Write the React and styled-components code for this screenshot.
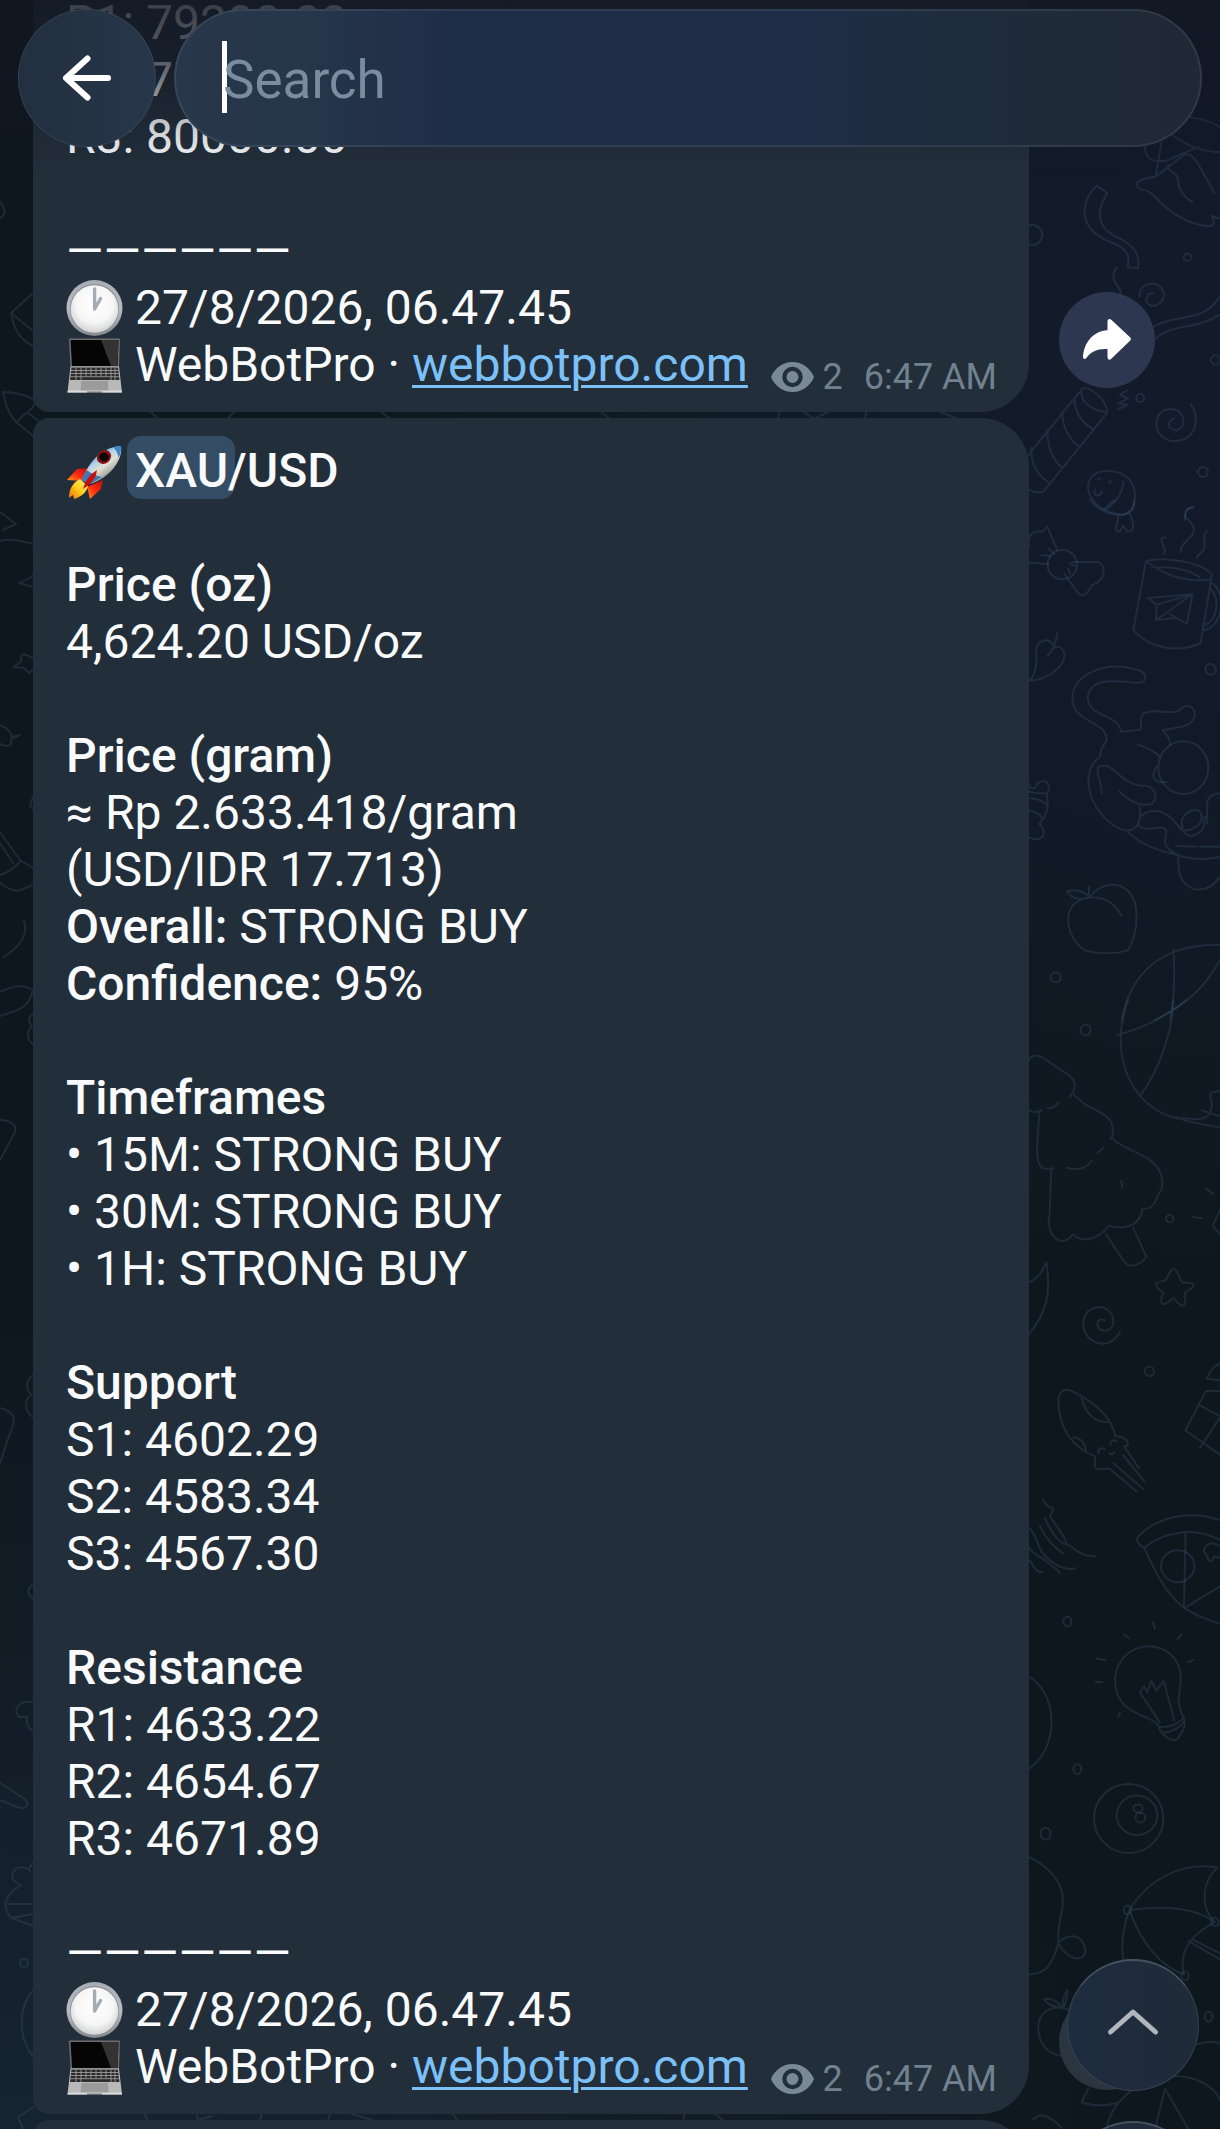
import React from 'react'
import styled, { createGlobalStyle } from 'styled-components'

const GlobalStyle = createGlobalStyle`
  * {
    box-sizing: border-box;
  }

  body {
    margin: 0;
    background: #0f171f;
    color: #f8fafc;
    font-family: Roboto, "Liberation Sans", sans-serif;
  }
`

const Page = styled.div`
  position: relative;
  height: 100vh;
  overflow: hidden;
  background:
    radial-gradient(ellipse 70% 44% at 100% 16%, #131a2a 0%, #121a28 45%, rgba(19, 26, 42, 0) 100%),
    radial-gradient(ellipse 90% 38% at 0% 100%, #162431 0%, rgba(21, 35, 47, 0) 100%),
    #0f171e;
`

const Wallpaper = styled.svg`
  position: absolute;
  inset: 0;
  width: 100%;
  height: 100%;
  fill: none;
  stroke: rgba(84, 118, 156, 0.2);
  stroke-width: 2px;
  stroke-linecap: round;
  stroke-linejoin: round;

  path,
  circle,
  ellipse {
    vector-effect: non-scaling-stroke;
  }
`

const TopBar = styled.header`
  position: fixed;
  top: 0;
  left: 0;
  right: 0;
  z-index: 2;
  display: flex;
  gap: 18px;
  padding: 9px 18px 24px;
  background: linear-gradient(
    rgba(18, 24, 35, 0.84) 0%,
    rgba(18, 24, 35, 0.68) 38%,
    rgba(18, 24, 35, 0.16) 78%,
    rgba(18, 24, 35, 0) 100%
  );
`

const BackButton = styled.button`
  display: flex;
  align-items: center;
  justify-content: center;
  flex: none;
  width: 138px;
  height: 138px;
  padding: 0;
  border: 1px solid rgba(255, 255, 255, 0.08);
  border-radius: 50%;
  background: linear-gradient(90deg, #222f40, #27364a);
  cursor: pointer;
`

const SearchBox = styled.label`
  display: flex;
  align-items: center;
  flex: 1;
  height: 138px;
  padding: 0 46px;
  border: 2px solid rgba(255, 255, 255, 0.08);
  border-radius: 69px;
  background: linear-gradient(90deg, #28374a 0%, #26364b 12%, #1e2d46 28%, #1e2d45 62%, #1f2b38 86%, #1f2935 100%);
  background-origin: border-box;
`

const Caret = styled.span`
  flex: none;
  width: 5px;
  height: 72px;
  margin: 0 -4px 2px 0;
  background: #fff;
`

const SearchInput = styled.input`
  flex: 1;
  min-width: 0;
  padding: 4px 0 0;
  border: 0;
  outline: 0;
  background: none;
  color: #fff;
  caret-color: transparent;
  font-family: inherit;
  font-size: 53px;

  &::placeholder {
    color: #7a8c9d;
    opacity: 1;
  }
`

const MessageList = styled.main`
  position: relative;
  z-index: 1;
  display: flex;
  flex-direction: column;
  gap: 6px;
  margin-top: -30px;
`

const MessageRow = styled.div`
  display: flex;
  align-items: flex-end;
  gap: 30px;
  padding: 0 65px 0 33px;
`

const Bubble = styled.article`
  flex: 1;
  min-height: 160px;
  padding: 24px 32px 14px 33px;
  border-radius: ${({ $continued }) => ($continued ? '0 0 48px 16px' : '16px 48px 48px 16px')};
  background: #222e3a;
  font-size: 48px;
  line-height: 57px;
`

const Section = styled.section`
  & + & {
    margin-top: 57px;
  }
`

const Line = styled.p`
  margin: 0;
  white-space: nowrap;
  font-weight: ${({ $bold }) => ($bold ? 500 : 400)};
`

const Strong = styled.b`
  font-weight: 500;
`

const Highlight = styled.mark`
  margin: 0 -7px 0 -8px;
  padding: 6px 7px 0 8px;
  border-radius: 14px;
  background: #344c64;
  color: inherit;
`

const SiteLink = styled.a`
  color: #7cc0f8;
  text-decoration: underline;
  text-decoration-thickness: 3px;
  text-underline-offset: 4px;
`

const LastRow = styled.div`
  display: flex;
  align-items: flex-end;
  justify-content: space-between;

  ${Line} {
    margin-bottom: 5px;
  }
`

const Meta = styled.div`
  display: flex;
  align-items: center;
  color: #71818f;
  font-size: 36px;
  line-height: 42px;
  white-space: nowrap;
`

const Views = styled.span`
  display: flex;
  align-items: center;
  gap: 9px;
  margin-right: 21px;
`

const Emoji = styled.svg`
  width: 57px;
  height: 57px;
  vertical-align: top;
`

const ForwardButton = styled.button`
  display: flex;
  align-items: center;
  justify-content: center;
  flex: none;
  width: 96px;
  height: 96px;
  margin-bottom: 24px;
  padding: 0;
  border: 0;
  border-radius: 50%;
  background: ${({ $muted }) => ($muted ? '#2a3540' : '#2d3850')};
  cursor: pointer;
`

const JumpButtons = styled.nav`
  position: fixed;
  right: 21px;
  bottom: -124px;
  z-index: 3;
  display: flex;
  flex-direction: column;
  gap: 30px;
`

const JumpButton = styled.button`
  display: flex;
  align-items: center;
  justify-content: center;
  width: 132px;
  height: 132px;
  padding: 0 0 8px;
  border: 1px solid rgba(255, 255, 255, 0.1);
  border-top: 2px solid rgba(255, 255, 255, 0.18);
  border-radius: 50%;
  background: linear-gradient(90deg, #1f2c40, #1f2b38);
  background-origin: border-box;
  cursor: pointer;
`

const ClockEmoji = () => (
  <Emoji viewBox="0 0 57 57" role="img" aria-label="one o'clock">
    <defs>
      <linearGradient id="rim" x1="0" y1="0" x2="0" y2="1">
        <stop offset="0" stopColor="#a6acb6" />
        <stop offset=".5" stopColor="#b9bcc1" />
        <stop offset="1" stopColor="#85888d" />
      </linearGradient>
      <radialGradient id="face" cx=".5" cy=".4" r=".6">
        <stop offset="0" stopColor="#fff" />
        <stop offset=".65" stopColor="#f6f6f6" />
        <stop offset="1" stopColor="#d2d3d5" />
      </radialGradient>
    </defs>
    <circle cx="28.5" cy="29" r="28" fill="url(#rim)" />
    <circle cx="28.5" cy="29.5" r="24.5" fill="#8b8f96" />
    <circle cx="28.5" cy="30" r="23.8" fill="url(#face)" />
    <path d="M28.6 10v20l6-10.5" fill="none" stroke="#a4abb3" strokeWidth="3.4" strokeLinecap="round" strokeLinejoin="round" />
  </Emoji>
)

const LaptopEmoji = () => (
  <Emoji viewBox="0 0 57 57" role="img" aria-label="laptop">
    <path d="M3 3.5Q3 2.5 4 2.5H53Q54 2.5 54 3.5L53 31H4.5Z" fill="#6c6e70" />
    <path d="M4.5 4H52.500L51.500 30H6Z" fill="#050505" />
    <path d="M35 4H52.500L51.500 30H45Z" fill="#333" />
    <path d="M4.5 30.5H53L56 56.500H1.5Z" fill="#b9b9ba" />
    <path d="M5.5 31.5H52L53.5 44H4Z" fill="#2c2c2d" />
    <path d="M5 34.5H53M4.5 37.5H53M4 40.7H53.5" stroke="#a5a5a6" strokeWidth=".8" />
    <path d="M10 31.5V44M15 31.5V44M20 31.5V40.5M25 31.5V40.5M30 31.5V40.5M35 31.5V40.5M40 31.5V40.5M45 31.5V44M49 31.5V44" stroke="#a5a5a6" strokeWidth=".8" />
    <path d="M15.5 45H42L42.5 55H14.5Z" fill="#9b9b9c" />
    <path d="M1.5 56.500L1.8 54.5H55.8L56 56.500Z" fill="#dadada" />
    <path d="M21 55.5H36V57H21Z" fill="#6e7074" />
  </Emoji>
)

const RocketEmoji = () => (
  <Emoji viewBox="0 0 57 57" role="img" aria-label="rocket">
    <defs>
      <linearGradient id="body" x1=".25" y1=".2" x2=".7" y2=".8">
        <stop offset="0" stopColor="#4c93cf" />
        <stop offset=".35" stopColor="#b4d4e6" />
        <stop offset=".6" stopColor="#e2e1d3" />
        <stop offset="1" stopColor="#8b948e" />
      </linearGradient>
      <linearGradient id="fin" x1="1" y1="0" x2="0" y2="1">
        <stop offset="0" stopColor="#b10d08" />
        <stop offset=".55" stopColor="#ff2c10" />
        <stop offset="1" stopColor="#ff9a1c" />
      </linearGradient>
      <linearGradient id="flame" x1="1" y1="0" x2="0" y2="1">
        <stop offset="0" stopColor="#fff27a" />
        <stop offset=".5" stopColor="#ffce1e" />
        <stop offset="1" stopColor="#f06a0c" />
      </linearGradient>
    </defs>
    <path d="M23 26L11 27L1 38L16 39Z" fill="url(#fin)" />
    <path d="M37 38L35 47L24 57L21 45Z" fill="url(#fin)" />
    <path d="M14 37C6 41 3 48 3 56L7 53L8 57C15 55 20 51 22 44Z" fill="url(#flame)" />
    <path d="M16 38C25 14 40 5 55 4C57 19 43 36 24 42Z" fill="url(#body)" />
    <path d="M47 5C50 4.5 53 4 55 4C55.5 8 54.5 12 52.5 16C51.5 11 50 8 47 5Z" fill="#3f88c8" />
    <path d="M21 28C17 34 16 36 16 38L24 42L36 35C31 34 24 31 21 28Z" fill="#3c79b5" />
    <path d="M31 28C23 33 20 38 17 47C25 42 30 37 31 28Z" fill="#c4100c" />
    <ellipse cx="38" cy="15" rx="7.5" ry="6.5" fill="#8c1115" transform="rotate(-40 38 15)" />
    <ellipse cx="38" cy="15" rx="5" ry="4.4" fill="#0b0506" />
  </Emoji>
)

const EyeIcon = () => (
  <svg width="43" height="30" viewBox="0 0 43 30" aria-hidden="true">
    <path
      fill="#7a8998"
      fillRule="evenodd"
      d="M21.5 0C11.7 0 3.5 6.2 0 15c3.5 8.8 11.7 15 21.5 15S39.5 23.8 43 15C39.5 6.2 31.3 0 21.5 0Zm0 25.2a10.2 10.2 0 1 1 0-20.4 10.2 10.2 0 0 1 0 20.4Zm0-4.2a6 6 0 1 0 0-12 6 6 0 0 0 0 12Z"
    />
  </svg>
)

const BackIcon = () => (
  <svg width="54" height="54" viewBox="0 0 54 54" fill="none" stroke="#fff" strokeWidth="6" strokeLinecap="round" strokeLinejoin="round" aria-hidden="true">
    <path d="M48 27H6M27.5 7.5L6 27l21.5 19.5" />
  </svg>
)

const ForwardIcon = () => (
  <svg width="50" height="44" viewBox="0 0 50 44" aria-hidden="true">
    <path
      fill="#fff"
      d="M25.5 3.5c0-2.6 2-3.4 3.8-1.8l18.7 17.6c1.3 1.2 1.3 2.3 0 3.5L29.3 40.8c-1.8 1.7-3.8.8-3.8-1.7v-8C16 30.5 9 33.5 4.5 39.8 3.2 41.6.9 41.3 1 39 2 24.5 11 13.3 25.5 12.3Z"
    />
  </svg>
)

const ChevronUp = () => (
  <svg width="54" height="28" viewBox="0 0 54 28" fill="none" stroke="#b1b5bc" strokeWidth="5" strokeLinecap="round" strokeLinejoin="round" aria-hidden="true">
    <path d="M4.5 24L27 4l22.5 20" />
  </svg>
)

const Doodles = () => (
  <Wallpaper viewBox="0 0 1220 2129" preserveAspectRatio="xMaxYMin slice" aria-hidden="true">
    {/* streamers, spirals and the candy stick */}
    <g transform="translate(720 0) scale(.3333)">
      <path d="M1130 557l32 22c-35 55-30 100 20 128c55 25 80 50 72 97l-32-2c12-40-5-58-50-76c-90-36-100-110-42-169Z" />
      <path d="M1325 425l-18 105M1275 440c0 40 30 50 70 40l90-40M1350 400c50 40 100 55 150 57M1410 352c40 5 70 17 90 30M1307 530l85-65c20-10 40 20 50 40l42 75M1307 530c-60 8-70 25-45 38c22 4 30 8 44 23c50 55 100 80 155 88c20 0 27-10 14-31l25 8M1345 495c-5 25 30 15 30 50c0 25 20 50 42 60" />
      <path d="M1190 803c-20 30-5 45 5 58c10 10 8 20 5 30M1258 890c0-45 55-50 70-20c15 25-15 55-40 45c-15-10-10-35 12-35M1300 980c70-40 150-10 200-90M1305 1018c50-50 120-25 195-75" />
      <circle cx="937" cy="705" r="30" />
      <circle cx="1402" cy="772" r="11" />
      <circle cx="1261" cy="1194" r="12" />
      <circle cx="1487" cy="1080" r="14" />
      <circle cx="1449" cy="1416" r="15" />
      <path d="M1222 1170l-22 15 24 10-30 15 30 5-30 12M1413 1213c30 40 15 110-50 110c-60 0-75-85-18-95c50-8 60 55 25 62c-30 0-30-25-8-35" />
      <path d="M925 1365l165-202c35 5 70 40 72 75l-192 238c-15 3-30 0-45-8M1084 1175c0 40 50 62 76 60M1063 1195c5 50 20 70 55 92M1027 1235c0 50 20 80 50 105M982 1290c0 60 20 90 45 115M935 1345c-5 50 20 80 50 102" />
      <path d="M1160 1413c60 0 85 35 85 75c0 40-20 60-50 55c-60-10-95-50-90-90c5-25 25-40 55-40ZM1210 1445c-5 40-20 60-50 82M1140 1435l-5 5M1172 1443l-5 5M1125 1470c-10 20 20 20 20 5M1420 1522c-25 0-25 20-25 38" />
    </g>

    {/* sweets, mug, cat and peach */}
    <g transform="translate(1000 500) scale(.3333)">
      <path d="M270 0c20 25 55 45 90 45c30 0 45-15 42-45M355 50l-8 40 12 5 10-18 14 18 14-5c6-15-2-40-12-55M312 28l32-28" />
      <path d="M87 140c-5-40 15-50 40-45l15-15 30 72M87 188l60 4M215 186h80c20 10 30 50-20 70c-15 30-25 35-40 25l-42-60M145 145l18 18M125 165l25 3M207 190l20 8M205 205l5 18" />
      <circle cx="187" cy="194" r="44" />
      <path d="M490 162c15-15-10-25-5-48l12-2M542 157c-5-40 80-50 15-105c-5-15 5-30 22-30M590 173c10-20 30-10 22-60c0-15 5-18 12-20" />
      <path d="M438 183c60-15 170 5 198 40l-34 206c-60 30-150 20-202-38ZM438 183c60 50 140 65 195 55M470 203c40-5 100 5 130 30M636 250c40 20 40 130-28 142M632 268c30 30 20 95-20 108" />
      <path d="M444 294l134-12-18 90-50-30M470 314l-26-20M470 314l108-32M470 314l-2 46 110-78M468 360l60-6" />
      <path d="M172 398c-5 30-10 50-30 70M160 435c-15-25-50-15-52 20c5 40-5 75-20 87c60 0 110-50 105-80c-5-25-25-25-33-15" />
      <circle cx="632" cy="508" r="16" />
      <path d="M300 770c0-25 10-30 20-50c0-60-103-50-103-125c0-70 100-120 205-82c20 10 20 35-10 36c-60-5-140-20-149 43c0 60 95 50 100 103l58-6c10-8-10-30 12-50c40-15 75 8 105-8c20-25 50-10 46 18c-10 35-50 32-96 42c15 18 22 25 23 45M300 770c-60 40-40 150 40 205c50 35 90 10 78-55M300 800c35-20 60 50 120 57c40-5 60 30 35 55c-40 10-70-10-97-38M305 880c0-40-20-60-10-80M380 992c50 50 100 60 160 75M412 733c25 10 45 15 65 35M418 980c-10-30 20-48 50-47c45 5 65 45 75 55c25 10 60-10 63-35c-2-40-48-20-60 5c-5 40 15 50 30 50c60-20 20-50 45-60M418 980c30 20 60-10 80 10c5 20-10 30 0 45c20 40 100 50 162 35M535 1065c0 50 0 85 50 103c35 5 60-15 75-38M470 800c-20 30-10 50 30 45M660 880c-60 5-30 50-40 90M530 1038l60 2M600 1040h60" />
      <ellipse cx="550" cy="803" rx="75" ry="79" />
      <path d="M87 850c0 25 25 15 25 0c25-20 45 5 28 32c8 40 0 65-22 90c25 20 15 60-31 40M87 895c20 0 35 5 52 17M87 930c20 5 35 15 42 28M87 875c15 5 30 5 50 5" />
      <path d="M270 1192c30-50 120-60 138 30c5 50 0 90-25 130c-60 15-110 5-130-2c-60-40-75-150 17-157c50-5 80 25 95 55M270 1192c-30-30-60-20-70-17c20 25 40 25 70 17ZM267 1160v22" />
      <circle cx="167" cy="1432" r="15" />
      <path d="M660 1335c-180-5-270 90-295 225M520 1347c5 70 5 140-10 213M465 1560c90-45 150-95 195-180" />
    </g>

    {/* tree, star and squid */}
    <g transform="translate(1000 1000) scale(.3333 .3444)">
      <circle cx="257" cy="87" r="15" />
      <circle cx="509" cy="635" r="11" />
      <circle cx="448" cy="1078" r="14" />
      <path d="M385 0c-60 150 0 310 150 345M520 0c0 80-40 200-97 275M350 102c80-20 150-55 210-102M530 340c40 20 90 20 130 30M660 265c-50 0-20 20-25 45c-5 40-40 40-90 32M605 320l55 18" />
      <path d="M87 175c10-20 25-15 40-8l75 48c25 15 30 40 8 65M222 275c50 60 130 40 115 125M332 400c60 50 160 50 155 140c-5 20-15 25-20 45c-10 15-20 25-40 20c-5 60-70 60-100 50c-40 50-90 45-108 25c-40 50-85-5-70-60l5-135M118 325c0 50-25 165 20 165h22M87 320c15 10 25 5 38 0M143 314c15 0 25-5 32-17M200 487c35 10 60 0 76-20M292 444l18-15M363 525c5 8 5 15 2 20M318 680l55 80c15 20 50 10 66-15l-40-85" />
      <path d="M87 820c25-10 40-30 52-58c15 90 0 150-52 207M580 630l25 4M618 548l20 15M660 610l-22 45 22 25" />
      <path d="M522 780c10 0 18 40 28 40c40 0 40 10 5 30c5 50-10 45-35 15c-35 30-45 20-30-15c-40-30-20-30 5-35c10-10 15-35 27-35Z" />
      <path d="M360 965c-35 60-110 30-110-25c0-60 85-65 90-10c0 45-55 35-47 5c5-10 15-8 22-5" />
      <path d="M175 1160c5-30 25-35 50-20c60 30 110 70 120 125c35 5 45 20 35 30l-8 0 45 65M370 1322l64 77M340 1345l90 75M330 1362l80 65M175 1160c0 80 40 140 110 165c0 20-5 40 15 37l25-1M245 1158c15 50 45 70 85 68M220 1270c20 0 35 15 38 40M296 1318c-5-15 8-20 18-14M332 1290c0-10 10-15 18-8M328 1316c5 5 12 5 15-5" />
      <path d="M660 1135h-42l-62 115 104 70M600 1178l60 30M600 1300l60-88M620 1100c10-25 25-40 40-45M620 1100l40 4" />
    </g>

    {/* pizza, bulb, ball and umbrella */}
    <g transform="translate(1000 1500) scale(.3333 .4011)">
      <path d="M130 0l8 12 22 10-10 18c20 30 40 40 50 70c30 10 30 30 88 30M120 65c20 40 70 70 70 68M135 45c15 30 40 60 60 65M87 70c30 20 20 60 70 85c25 15 50 20 68 15M87 118c10 20 50 25 92 64M87 150c15 10 15 30 40 30" />
      <path d="M660 50c-90-25-190-10-250 45c0 10 10 20 22 24c70-45 150-50 228-20M434 120c30 60 70 120 120 150c40 20 70 30 106 38M557 80l-5 190 108-55M660 115c-30-15-55 0-45 18c10 5 5 20 20 20l8-12 17 4" />
      <ellipse cx="533" cy="165" rx="50" ry="40" />
      <path d="M475 562c-20-30-130-20-130-115c10-110 195-110 198 0c-5 40-15 60 5 90c15 25 0 40-15 58c-10 10-20 0-28 0c-15-10-25-15-30-33ZM480 555l-60-75 12-15 10 15 12-30 15 25 22-25 32 100M475 565c40 5 60-10 78-22M485 580c30 0 50-10 65-25M458 305l7 15M372 335l14 9M545 335l-12 11M565 404l15-5M290 395l28 5M287 454h20M355 540l5-10" />
      <ellipse cx="386" cy="794" rx="104" ry="86" />
      <ellipse cx="411" cy="786" rx="61" ry="49" />
      <ellipse cx="414" cy="769" rx="14" ry="10" />
      <ellipse cx="421" cy="792" rx="15" ry="12" />
      <circle cx="202" cy="303" r="12" />
      <circle cx="232" cy="671" r="12" />
      <circle cx="137" cy="832" r="15" />
      <circle cx="626" cy="1288" r="12" />
      <path d="M87 440c90 45 90 180 0 230M87 890c70 30 110 70 100 125c-10 50-15 60-12 90c40 60 100 40 75 0c-20-30-60-15-75 0c-20 60-40 75-88 78" />
      <path d="M388 1022c60-80 160-120 264-106c-50 40-50 100-8 137c-70 30-110 70-92 130c-70-20-130-80-164-161ZM388 1022c90-10 190-10 256 30M388 1022c-25 60-30 120 0 165M565 1100l95 45M575 1095l85 35" />
      <circle cx="382" cy="1022" r="11" />
      <circle cx="645" cy="1052" r="11" />
      <circle cx="555" cy="1186" r="11" />
      <path d="M210 1272c-60-20-100 10-95 50c5 40 30 60 75 65M190 1265c-30 0-50-10-58-20c20-5 40 5 55 20M188 1262c0-20 5-30 15-40c0 20-5 30-10 40M265 1467l-20 35c40 10 80 8 110 0M320 1568c10-60 90-130 200-132c60 0 120 20 140 60M465 1568l30-100 70 100M580 1360c30-10 60-10 80-5M100 1545c20-20 50-10 85 20" />
    </g>

    {/* left edge */}
    <path d="M0 202c4 4 8 12 0 16M33 293L11 313c3 20 12 28 22 33M11 313l22 18M3 392c14 0 22 3 30 7c5 5-3 10-5 14c-6 0-8 8-12 9C8 414 5 404 3 392ZM28 413l25 19M16 422l22 18" />
    <path d="M0 512l16 12-13 6M0 541c12-3 22 0 33 3M33 575c-3 4-8 6-14 8l14 4M33 658l-9-4-3 2v5l-7 6 10 1 5 5 4-4M0 725c7 3 11 7 12 12l8-2-9 4c2 8-5 8-11 5M33 797l-3 9 3 3M0 832l20 28 13 8M0 843l13 20M0 875c9-2 16-9 21-14M0 883c6 5 14 8 18 8l15-6M24 921c5 15-6 27-20 36" />
    <path d="M0 992c12-6 24-8 33-2c-4 18-14 20-33 26M33 1014c-6 4-4 9-1 12c-6 6-5 14 1 18M0 1120c12 0 18 6 14 14L0 1160" />
    <path d="M0 1408c18 5 15 12 10 25L0 1463M33 1375c-10 8-5 17-1 20c-10 5-6 18 1 22M33 1584c-7 6-6 10 0 15M33 1702c-16-2-20 9-14 15l8 0c-1 8 2 12 6 14" />
    <path d="M0 1783l22 14c10 7 5 13-5 10L0 1800M33 1863c-4 4-5 7-3 8c-12-10-22 2-16 10l7 4c-20 13-18 22-10 33l22 8M8 1904h25M11 1918l22-4M33 1991c-15 15-15 48 0 65M33 2107l-15 10 5 12" />
    <circle cx="24" cy="1963" r="4" />
    <path d="M150 411l8 8M235 411l-8 8M380 411l10 8M600 411l10 8M780 411l-2 8M802 411l12 8 16-8M867 411l-3 8M938 411l20 8" />
    <path d="M144 2113l4 8M196 2113l2 7 14-4M262 2113l-2 8M328 2120l3-7M352 2114l20 6M452 2113l6 8M685 2113l-2 8M714 2113l10 8" />
  </Wallpaper>
)

const LevelSection = ({ title, prefix, levels }) => (
  <Section>
    {title && <Line $bold>{title}</Line>}
    {levels.map((level, i) => (
      <Line key={level}>{`${prefix}${i + 1}: ${level}`}</Line>
    ))}
  </Section>
)

const Signature = () => (
  <Section>
    <Line>——————</Line>
    <Line>
      <ClockEmoji /> 27/8/2026, 06.47.45
    </Line>
    <LastRow>
      <Line>
        <LaptopEmoji /> WebBotPro · <SiteLink href="#webbotpro">webbotpro.com</SiteLink>
      </Line>
      <Meta>
        <Views>
          <EyeIcon />2
        </Views>
        <time>6:47 AM</time>
      </Meta>
    </LastRow>
  </Section>
)

const timeframes = [
  { label: '15M', signal: 'STRONG BUY' },
  { label: '30M', signal: 'STRONG BUY' },
  { label: '1H', signal: 'STRONG BUY' },
]

const App = () => {
  return (
    <Page>
      <GlobalStyle />
      <Doodles />

      <TopBar>
        <BackButton type="button" aria-label="Back">
          <BackIcon />
        </BackButton>
        <SearchBox>
          <Caret />
          <SearchInput type="text" placeholder="Search" aria-label="Search" />
        </SearchBox>
      </TopBar>

      <MessageList>
        <MessageRow>
          <Bubble $continued>
            <LevelSection prefix="R" levels={['79200.00', '79600.00', '80000.00']} />
            <Signature />
          </Bubble>
          <ForwardButton type="button" aria-label="Forward">
            <ForwardIcon />
          </ForwardButton>
        </MessageRow>

        <MessageRow>
          <Bubble>
            <Section>
              <Line $bold>
                <RocketEmoji /> <Highlight>XAU</Highlight>/USD
              </Line>
            </Section>
            <Section>
              <Line $bold>Price (oz)</Line>
              <Line>4,624.20 USD/oz</Line>
            </Section>
            <Section>
              <Line $bold>Price (gram)</Line>
              <Line>≈ Rp 2.633.418/gram</Line>
              <Line>(USD/IDR 17.713)</Line>
              <Line>
                <Strong>Overall:</Strong> STRONG BUY
              </Line>
              <Line>
                <Strong>Confidence:</Strong> 95%
              </Line>
            </Section>
            <Section>
              <Line $bold>Timeframes</Line>
              {timeframes.map(({ label, signal }) => (
                <Line key={label}>{`• ${label}: ${signal}`}</Line>
              ))}
            </Section>
            <LevelSection title="Support" prefix="S" levels={['4602.29', '4583.34', '4567.30']} />
            <LevelSection title="Resistance" prefix="R" levels={['4633.22', '4654.67', '4671.89']} />
            <Signature />
          </Bubble>
          <ForwardButton type="button" aria-label="Forward" $muted />
        </MessageRow>

        <MessageRow>
          <Bubble />
          <ForwardButton type="button" aria-label="Forward" />
        </MessageRow>
      </MessageList>

      <JumpButtons aria-label="Search results">
        <JumpButton type="button" aria-label="Previous result">
          <ChevronUp />
        </JumpButton>
        <JumpButton type="button" aria-label="Next result" />
      </JumpButtons>
    </Page>
  )
}

export default App
